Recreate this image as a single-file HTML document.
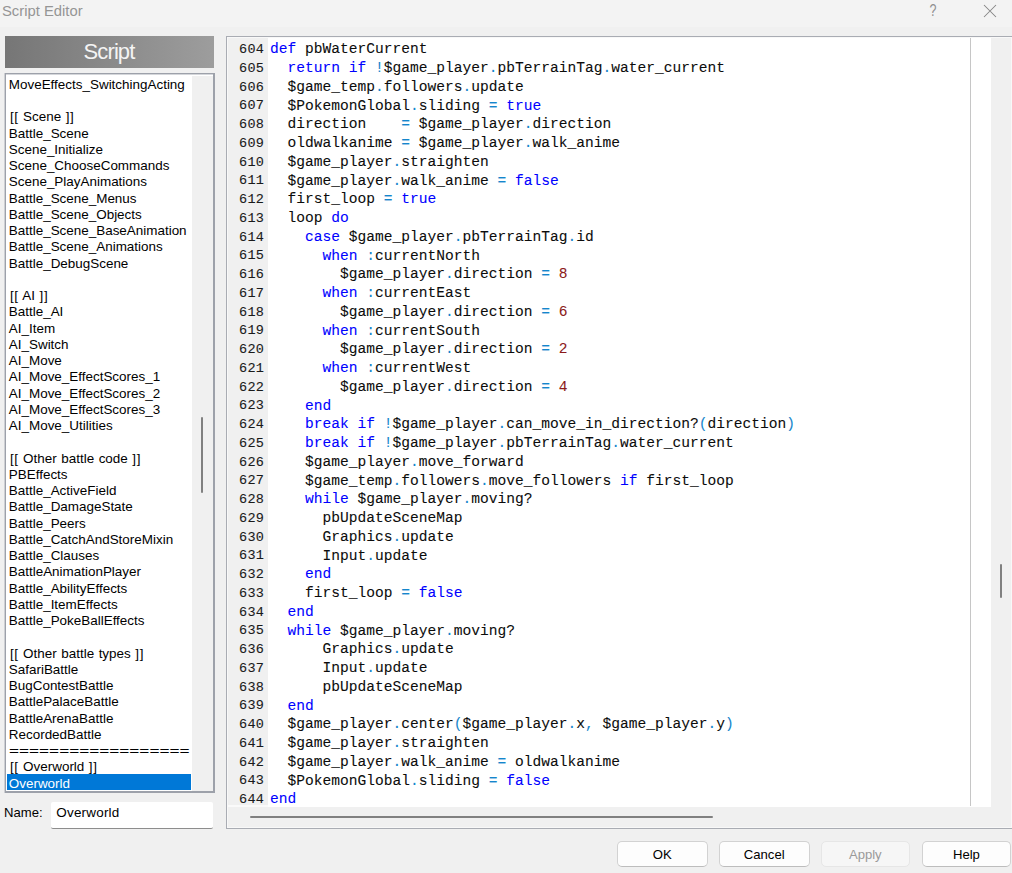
<!DOCTYPE html>
<html><head><meta charset="utf-8"><title>Script Editor</title>
<style>
html,body{margin:0;padding:0;}
body{width:1012px;height:873px;overflow:hidden;background:#f0f0f0;position:relative;font-family:"Liberation Sans",sans-serif;color:#000;}
.abs{position:absolute;}
#titlebar{left:0;top:0;width:1012px;height:27px;background:#f3f3f3;}
#title{left:2px;top:1.8px;font-size:14.8px;line-height:19px;color:#959595;white-space:nowrap;}
#qm{left:926.8px;top:0px;width:12px;text-align:center;font-size:16px;line-height:21px;color:#8f8f8f;transform:scaleX(0.78);}
#hdr{left:4.5px;top:36px;width:209.6px;height:32px;background:linear-gradient(90deg,#767676 0%,#9d9d9d 100%);color:#f4f4f4;font-size:22px;line-height:31px;text-align:center;letter-spacing:-0.9px;text-indent:-0.6px;}
#list{left:5px;top:73px;width:207px;height:717px;background:#fff;border:1px solid #9da1aa;border-right-width:2px;border-bottom-width:2px;box-shadow:-1px 0 0 #cdcfd3, inset 0 1px 0 #d4d6da;}
#ltrack{left:192px;top:76px;width:21px;height:715px;background:#f0f0f0;}
#lthumb{left:200.9px;top:416.8px;width:2.5px;height:76.2px;background:#808080;border-radius:1px;}
#items{left:7px;top:75.75px;width:184px;font-size:13.45px;line-height:16.25px;letter-spacing:0px;white-space:pre;}
.li{height:16.25px;line-height:18.6px;padding-left:1.8px;}
.brow{padding-left:2.9px;word-spacing:0.8px;}
.br{letter-spacing:0.6px;}
.eq{display:inline-block;transform:scaleX(1.278);transform-origin:0 50%;margin-left:0.6px;}
.sel{color:#fff;}
#selbg{left:7px;top:774.25px;width:184px;height:16px;background:#0078d7;}
#namelbl{left:4px;top:805px;font-size:13.1px;line-height:16px;}
#namebox{left:51px;top:802px;width:162px;height:27px;background:#fff;border-bottom:1px solid #8d8d8d;border-radius:2px;box-sizing:border-box;}
#nametxt{left:56.3px;top:805px;letter-spacing:0.22px;font-size:13.45px;line-height:16px;}
#panel{left:226px;top:36px;width:790px;height:793px;border:1px solid #a9acb3;background:#f0f0f0;box-sizing:border-box;box-shadow:inset 0 0 0 1px #f8f8f8;}
#gutter{left:228px;top:38px;width:40px;height:767px;background:#f0f0f0;}
#under{left:228px;top:805px;width:763px;height:1.6px;background:#fafafa;}
#white{left:268px;top:38px;width:722.8px;height:768.5px;background:#fff;}
#edge{left:970px;top:38px;width:1.3px;height:767.5px;background:#c6c6c6;}
#vtrack{left:991px;top:38px;width:20px;height:768.5px;background:#f0f0f0;}
#vstrip{left:1011px;top:38px;width:1px;height:790px;background:#f8f8f8;}
#vthumb{left:999.8px;top:564.2px;width:2.5px;height:33.6px;background:#808080;border-radius:1px;}
#hthumb{left:249.7px;top:815.6px;width:463.5px;height:2.5px;background:#808080;border-radius:1px;}
#nums{left:228px;top:41.0px;width:36.1px;letter-spacing:0.25px;text-align:right;font-family:"Liberation Mono",monospace;font-size:13.5px;line-height:18.75px;color:#1a1a1a;-webkit-text-stroke:0.1px #1a1a1a;}
#nums div,#code div{height:18.75px;}
#code{left:270px;top:40.3px;font-family:"Liberation Mono",monospace;font-size:14.583px;line-height:18.75px;white-space:pre;color:#0c0c0c;-webkit-text-stroke:0.08px;}
.k{color:#0000ff;}
.o{color:#1586cc;}
.n{color:#8b1a1a;}
.btn{top:841px;width:90px;height:26px;box-sizing:border-box;border:1px solid #d2d2d2;border-bottom-color:#bdbdbd;border-radius:5px;background:#fdfdfd;font-size:13.1px;line-height:25.6px;text-align:center;color:#000;}
.btn.dis{background:#f6f6f6;border-color:#e6e6e6;color:#9a9a9a;}
</style></head><body>
<div id="titlebar" class="abs"></div>
<div id="title" class="abs">Script Editor</div>
<div id="qm" class="abs">?</div>
<svg class="abs" style="left:983px;top:4px" width="14" height="14" viewBox="0 0 14 14"><path d="M1 1 L13 13 M13 1 L1 13" stroke="#858585" stroke-width="1.05" fill="none"/></svg>
<div id="hdr" class="abs">Script</div>
<div id="list" class="abs"></div>
<div id="ltrack" class="abs"></div>
<div id="lthumb" class="abs"></div>
<div id="selbg" class="abs"></div>
<div id="items" class="abs"><div class="li">MoveEffects_SwitchingActing</div><div class="li">&nbsp;</div><div class="li brow"><span class="br">[[</span> Scene <span class="br">]]</span></div><div class="li">Battle_Scene</div><div class="li">Scene_Initialize</div><div class="li">Scene_ChooseCommands</div><div class="li">Scene_PlayAnimations</div><div class="li">Battle_Scene_Menus</div><div class="li">Battle_Scene_Objects</div><div class="li">Battle_Scene_BaseAnimation</div><div class="li">Battle_Scene_Animations</div><div class="li">Battle_DebugScene</div><div class="li">&nbsp;</div><div class="li brow"><span class="br">[[</span> AI <span class="br">]]</span></div><div class="li">Battle_AI</div><div class="li">AI_Item</div><div class="li">AI_Switch</div><div class="li">AI_Move</div><div class="li">AI_Move_EffectScores_1</div><div class="li">AI_Move_EffectScores_2</div><div class="li">AI_Move_EffectScores_3</div><div class="li">AI_Move_Utilities</div><div class="li">&nbsp;</div><div class="li brow"><span class="br">[[</span> Other battle code <span class="br">]]</span></div><div class="li">PBEffects</div><div class="li">Battle_ActiveField</div><div class="li">Battle_DamageState</div><div class="li">Battle_Peers</div><div class="li">Battle_CatchAndStoreMixin</div><div class="li">Battle_Clauses</div><div class="li">BattleAnimationPlayer</div><div class="li">Battle_AbilityEffects</div><div class="li">Battle_ItemEffects</div><div class="li">Battle_PokeBallEffects</div><div class="li">&nbsp;</div><div class="li brow"><span class="br">[[</span> Other battle types <span class="br">]]</span></div><div class="li">SafariBattle</div><div class="li">BugContestBattle</div><div class="li">BattlePalaceBattle</div><div class="li">BattleArenaBattle</div><div class="li">RecordedBattle</div><div class="li"><span class="eq">==================</span></div><div class="li brow"><span class="br">[[</span> Overworld <span class="br">]]</span></div><div class="li sel">Overworld</div></div>
<div id="namelbl" class="abs">Name:</div>
<div id="namebox" class="abs"></div>
<div id="nametxt" class="abs">Overworld</div>
<div id="panel" class="abs"></div>
<div id="under" class="abs"></div>
<div id="gutter" class="abs"></div>
<div id="white" class="abs"></div>
<div id="edge" class="abs"></div>
<div id="vtrack" class="abs"></div>
<div id="vstrip" class="abs"></div>
<div id="vthumb" class="abs"></div>
<div id="hthumb" class="abs"></div>
<div id="nums" class="abs"><div>604</div><div>605</div><div>606</div><div>607</div><div>608</div><div>609</div><div>610</div><div>611</div><div>612</div><div>613</div><div>614</div><div>615</div><div>616</div><div>617</div><div>618</div><div>619</div><div>620</div><div>621</div><div>622</div><div>623</div><div>624</div><div>625</div><div>626</div><div>627</div><div>628</div><div>629</div><div>630</div><div>631</div><div>632</div><div>633</div><div>634</div><div>635</div><div>636</div><div>637</div><div>638</div><div>639</div><div>640</div><div>641</div><div>642</div><div>643</div><div>644</div></div>
<div id="code" class="abs"><div><span class="k">def</span> pbWaterCurrent</div><div>  <span class="k">return</span> <span class="k">if</span> <span class="o">!</span>$game_player<span class="o">.</span>pbTerrainTag<span class="o">.</span>water_current</div><div>  $game_temp<span class="o">.</span>followers<span class="o">.</span>update</div><div>  $PokemonGlobal<span class="o">.</span>sliding <span class="o">=</span> <span class="k">true</span></div><div>  direction    <span class="o">=</span> $game_player<span class="o">.</span>direction</div><div>  oldwalkanime <span class="o">=</span> $game_player<span class="o">.</span>walk_anime</div><div>  $game_player<span class="o">.</span>straighten</div><div>  $game_player<span class="o">.</span>walk_anime <span class="o">=</span> <span class="k">false</span></div><div>  first_loop <span class="o">=</span> <span class="k">true</span></div><div>  loop <span class="k">do</span></div><div>    <span class="k">case</span> $game_player<span class="o">.</span>pbTerrainTag<span class="o">.</span>id</div><div>      <span class="k">when</span> <span class="o">:</span>currentNorth</div><div>        $game_player<span class="o">.</span>direction <span class="o">=</span> <span class="n">8</span></div><div>      <span class="k">when</span> <span class="o">:</span>currentEast</div><div>        $game_player<span class="o">.</span>direction <span class="o">=</span> <span class="n">6</span></div><div>      <span class="k">when</span> <span class="o">:</span>currentSouth</div><div>        $game_player<span class="o">.</span>direction <span class="o">=</span> <span class="n">2</span></div><div>      <span class="k">when</span> <span class="o">:</span>currentWest</div><div>        $game_player<span class="o">.</span>direction <span class="o">=</span> <span class="n">4</span></div><div>    <span class="k">end</span></div><div>    <span class="k">break</span> <span class="k">if</span> <span class="o">!</span>$game_player<span class="o">.</span>can_move_in_direction?<span class="o">(</span>direction<span class="o">)</span></div><div>    <span class="k">break</span> <span class="k">if</span> <span class="o">!</span>$game_player<span class="o">.</span>pbTerrainTag<span class="o">.</span>water_current</div><div>    $game_player<span class="o">.</span>move_forward</div><div>    $game_temp<span class="o">.</span>followers<span class="o">.</span>move_followers <span class="k">if</span> first_loop</div><div>    <span class="k">while</span> $game_player<span class="o">.</span>moving?</div><div>      pbUpdateSceneMap</div><div>      Graphics<span class="o">.</span>update</div><div>      Input<span class="o">.</span>update</div><div>    <span class="k">end</span></div><div>    first_loop <span class="o">=</span> <span class="k">false</span></div><div>  <span class="k">end</span></div><div>  <span class="k">while</span> $game_player<span class="o">.</span>moving?</div><div>      Graphics<span class="o">.</span>update</div><div>      Input<span class="o">.</span>update</div><div>      pbUpdateSceneMap</div><div>  <span class="k">end</span></div><div>  $game_player<span class="o">.</span>center<span class="o">(</span>$game_player<span class="o">.</span>x<span class="o">,</span> $game_player<span class="o">.</span>y<span class="o">)</span></div><div>  $game_player<span class="o">.</span>straighten</div><div>  $game_player<span class="o">.</span>walk_anime <span class="o">=</span> oldwalkanime</div><div>  $PokemonGlobal<span class="o">.</span>sliding <span class="o">=</span> <span class="k">false</span></div><div><span class="k">end</span></div></div>
<div class="btn abs" style="left:617px;width:90.5px">OK</div>
<div class="btn abs" style="left:718.9px;width:90.7px">Cancel</div>
<div class="btn abs dis" style="left:820.5px;width:89.6px">Apply</div>
<div class="btn abs" style="left:921.6px;width:89.7px">Help</div>
</body></html>
